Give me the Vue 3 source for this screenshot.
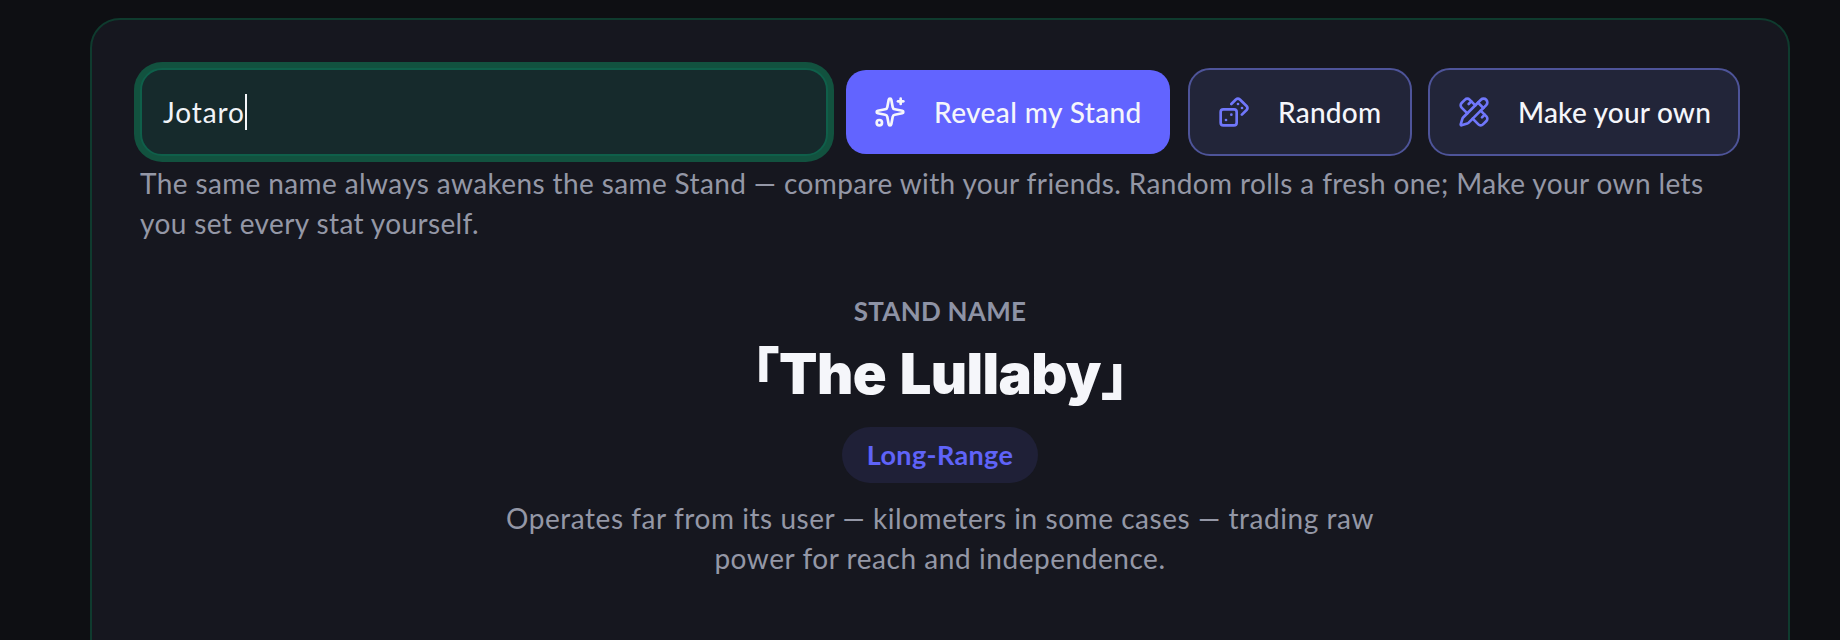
<script setup>
const name = 'Jotaro'
</script>

<template>
  <main class="page">
    <section class="card">
      <div class="controls">
        <div class="field"><span class="typed">{{ name }}</span><span class="caret"></span></div>
        <button class="btn primary">
          <svg class="ico" viewBox="0 0 24 24" fill="none" stroke="currentColor" stroke-width="2" stroke-linecap="round" stroke-linejoin="round">
            <path d="M11.017 2.814a1 1 0 0 1 1.966 0l1.051 5.558a2 2 0 0 0 1.594 1.594l5.558 1.051a1 1 0 0 1 0 1.966l-5.558 1.051a2 2 0 0 0-1.594 1.594l-1.051 5.558a1 1 0 0 1-1.966 0l-1.051-5.558a2 2 0 0 0-1.594-1.594l-5.558-1.051a1 1 0 0 1 0-1.966l5.558-1.051a2 2 0 0 0 1.594-1.594z" />
            <path d="M20 2v4" />
            <path d="M22 4h-4" />
            <circle cx="4" cy="20" r="2" />
          </svg>
          <span>Reveal my Stand</span>
        </button>
        <button class="btn ghost random">
          <svg class="ico accent" viewBox="0 0 24 24" fill="none" stroke="currentColor" stroke-width="2" stroke-linecap="round" stroke-linejoin="round">
            <rect x="2" y="10" width="12" height="12" rx="2" ry="2" />
            <path d="m17.92 14 3.5-3.5a2.24 2.24 0 0 0 0-3l-5-4.92a2.24 2.24 0 0 0-3 0L10 6" />
            <path d="M6 18h.01" />
            <path d="M10 14h.01" />
            <path d="M15 6h.01" />
            <path d="M18 9h.01" />
          </svg>
          <span>Random</span>
        </button>
        <button class="btn ghost own">
          <svg class="ico accent" viewBox="0 0 24 24" fill="none" stroke="currentColor" stroke-width="2" stroke-linecap="round" stroke-linejoin="round">
            <path d="M13 7 8.7 2.7a2.41 2.41 0 0 0-3.4 0L2.7 5.3a2.41 2.41 0 0 0 0 3.4L7 13" />
            <path d="m8 6 2-2" />
            <path d="m18 16 2-2" />
            <path d="m17 11 4.3 4.3c.94.94.94 2.46 0 3.4l-2.6 2.6c-.94.94-2.46.94-3.4 0L11 17" />
            <path d="M21.174 6.812a1 1 0 0 0-3.986-3.987L3.842 16.174a2 2 0 0 0-.5.83l-1.321 4.352a.5.5 0 0 0 .623.622l4.353-1.32a2 2 0 0 0 .83-.497z" />
            <path d="m15 5 4 4" />
          </svg>
          <span>Make your own</span>
        </button>
      </div>
      <p class="hint">The same name always awakens the same Stand — compare with your friends. Random rolls a fresh one; Make your own lets you set every stat yourself.</p>
      <div class="result">
        <div class="label">STAND NAME</div>
        <h1 class="title">「The Lullaby」</h1>
        <span class="pill">Long-Range</span>
        <p class="desc">Operates far from its user — kilometers in some cases — trading raw power for reach and independence.</p>
      </div>
    </section>
  </main>
</template>

<style>
html, body { margin: 0; background: #0e0f13; overflow: hidden; height: 100%; }
</style>

<style scoped>
.page {
  box-sizing: border-box;
  height: 640px;
  padding: 18px 50px 0 90px;
  overflow: hidden;
  font-family: "Lato", "Noto Sans", sans-serif;
}
.card {
  box-sizing: border-box;
  min-height: 900px;
  padding: 48px;
  background: #16171f;
  border: 2px solid #0f3b2e;
  border-radius: 30px;
}
.controls { display: flex; gap: 16px; }
.field {
  flex: 1;
  box-sizing: border-box;
  height: 88px;
  display: flex;
  align-items: center;
  padding: 0 21px;
  background: #162a2c;
  border: 2px solid #0f5f4a;
  border-radius: 22px;
  box-shadow: 0 0 0 6px #12523f;
  color: #f1f3f8;
  font-size: 28px;
  letter-spacing: 0.9px;
}
.caret { width: 2px; height: 36px; background: #f4f5f9; }
.btn {
  box-sizing: border-box;
  height: 88px;
  display: flex;
  align-items: center;
  gap: 28px;
  padding: 0 28px;
  white-space: nowrap;
  font: inherit;
  font-size: 28px;
  font-weight: 500;
  letter-spacing: 0.4px;
  color: #f5f6fb;
  border-radius: 22px;
  border: 2px solid #4e5499;
  background: #222539;
}
.btn.primary { width: 328px; background: #6264ff; background-clip: padding-box; border-color: transparent; }
.btn.random { width: 224px; letter-spacing: 0.25px; }
.btn.own { width: 312px; letter-spacing: 0.2px; }
.ico { width: 32px; height: 32px; flex: none; }
.accent { color: #7077fb; }
.hint {
  margin: 7px 0 0;
  color: #9497a6;
  font-size: 28px;
  letter-spacing: 0.38px;
  line-height: 40px;
}
.result { display: flex; flex-direction: column; align-items: center; text-align: center; margin-top: 50px; }
.label { color: #8e93a5; font-size: 26px; font-weight: 700; letter-spacing: 0.25px; line-height: 36px; }
.title {
  margin: 13px 0 0;
  color: #f5f6fa;
  font: 900 56px/64px "Inter", "Noto Sans CJK JP", sans-serif;
  letter-spacing: -0.6px;
  word-spacing: 3px;
}
.pill {
  margin-top: 21px;
  padding: 0 25px;
  height: 56px;
  line-height: 56px;
  border-radius: 28px;
  background: #1f2037;
  color: #5f63f8;
  font-size: 27px;
  font-weight: 700;
  letter-spacing: 0.35px;
}
.desc { width: 900px; margin: 15px 0 0; color: #9497a6; font-size: 28px; letter-spacing: 0.55px; line-height: 40px; }
</style>
